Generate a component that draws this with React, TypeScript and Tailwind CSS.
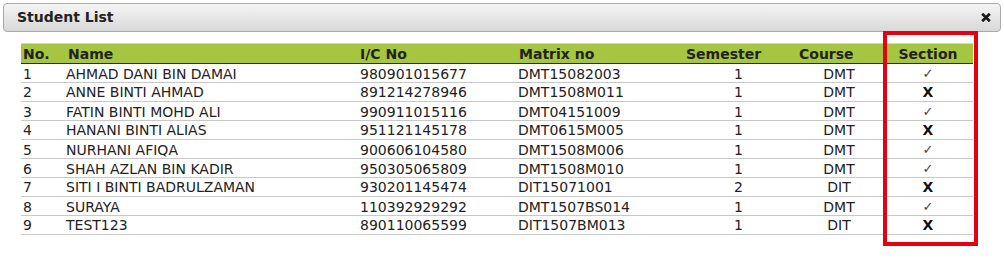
// Student list dialog with a section column highlighted.

const students = [
    { no: 1, name: "AHMAD DANI BIN DAMAI", ic: "980901015677", matrix: "DMT15082003", sem: 1, course: "DMT", ok: true },
    { no: 2, name: "ANNE BINTI AHMAD", ic: "891214278946", matrix: "DMT1508M011", sem: 1, course: "DMT", ok: false },
    { no: 3, name: "FATIN BINTI MOHD ALI", ic: "990911015116", matrix: "DMT04151009", sem: 1, course: "DMT", ok: true },
    { no: 4, name: "HANANI BINTI ALIAS", ic: "951121145178", matrix: "DMT0615M005", sem: 1, course: "DMT", ok: false },
    { no: 5, name: "NURHANI AFIQA", ic: "900606104580", matrix: "DMT1508M006", sem: 1, course: "DMT", ok: true },
    { no: 6, name: "SHAH AZLAN BIN KADIR", ic: "950305065809", matrix: "DMT1508M010", sem: 1, course: "DMT", ok: true },
    { no: 7, name: "SITI I BINTI BADRULZAMAN", ic: "930201145474", matrix: "DIT15071001", sem: 2, course: "DIT", ok: false },
    { no: 8, name: "SURAYA", ic: "110392929292", matrix: "DMT1507BS014", sem: 1, course: "DMT", ok: true },
    { no: 9, name: "TEST123", ic: "890110065599", matrix: "DIT1507BM013", sem: 1, course: "DIT", ok: false },
];

function CloseIcon() {
    return (
        <svg width="10" height="9" viewBox="0 0 10 9" className="block">
            <path d="M1.2 0.8 L8.8 8.2 M8.8 0.8 L1.2 8.2" stroke="#1a1a1a" strokeWidth="2.8" />
        </svg>
    );
}

const cols = "grid grid-cols-[42px_293px_159px_167px_113px_88px_90px]";

export default function App() {
    return (
        <div
            className="relative w-[1004px] h-[260px] bg-white text-[14px] text-[#222] overflow-hidden"
            style={{ fontFamily: '"DejaVu Sans", Verdana, sans-serif' }}
        >
            <div className="mx-[3px] mt-[3px] h-[29px] flex items-center justify-between rounded-[4px] border border-[#a9a9a9] bg-gradient-to-b from-[#f5f5f5] to-[#d8d8d8] pl-[13px] pr-[9px]">
                <span className="font-bold text-[#222]">Student List</span>
                <CloseIcon />
            </div>

            <div className="mt-[11px] ml-[21px] w-[952px] leading-[18px]">
                <div className={`${cols} h-[21px] items-center bg-[#a6c541] border-t border-t-[#cfe08f] border-b border-b-[#2a2a2a] font-bold text-[#222]`}>
                    <div className="pl-[2px]">No.</div>
                    <div className="pl-[5px]">Name</div>
                    <div className="pl-[4px]">I/C No</div>
                    <div className="pl-[4px]">Matrix no</div>
                    <div className="pl-[4px]">Semester</div>
                    <div className="pl-[4px]">Course</div>
                    <div className="text-center">Section</div>
                </div>
                {students.map((s) => (
                    <div key={s.no} className={`${cols} h-[19px] items-center border-b border-b-[#c8c8c8]`}>
                        <div className="pl-[2px]">{s.no}</div>
                        <div className="pl-[3px] whitespace-nowrap">{s.name}</div>
                        <div className="pl-[4px]">{s.ic}</div>
                        <div className="pl-[3px]">{s.matrix}</div>
                        <div className="text-center">{s.sem}</div>
                        <div className="text-center">{s.course}</div>
                        <div className="text-center">
                            {s.ok ? (
                                <span className="text-[13px] text-[#444]">✓</span>
                            ) : (
                                <span className="font-bold text-[#111]">X</span>
                            )}
                        </div>
                    </div>
                ))}
            </div>

            {/* annotation box over the Section column */}
            <div className="absolute left-[883px] top-[31px] w-[95px] h-[215px] border-[4px] border-[#e60012] pointer-events-none" />
        </div>
    );
}
